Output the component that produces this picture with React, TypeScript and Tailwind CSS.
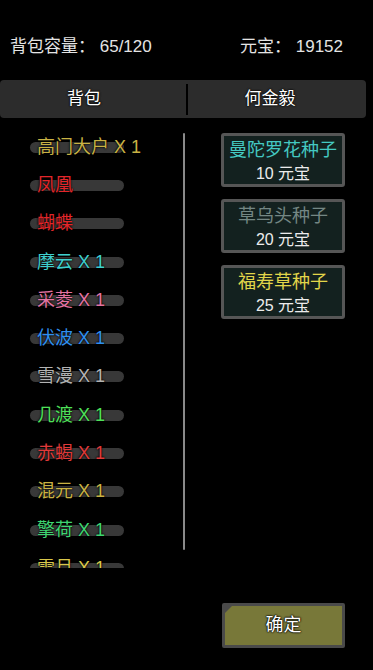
import React from 'react'

const font = { fontFamily: '"Liberation Sans", "Noto Sans CJK SC", sans-serif' }

const items = [
  { name: '高门大户 X 1', color: 'text-[#c9b244]' },
  { name: '凤凰', color: 'text-[#e2262a]' },
  { name: '蝴蝶', color: 'text-[#e2262a]' },
  { name: '摩云 X 1', color: 'text-[#3fd0cf]' },
  { name: '采菱 X 1', color: 'text-[#e373a3]' },
  { name: '伏波 X 1', color: 'text-[#2f8fef]' },
  { name: '雪漫 X 1', color: 'text-[#b3b3b3]' },
  { name: '几渡 X 1', color: 'text-[#4fe05a]' },
  { name: '赤蝎 X 1', color: 'text-[#e03a3a]' },
  { name: '混元 X 1', color: 'text-[#c9b244]' },
  { name: '擎荷 X 1', color: 'text-[#3fd572]' },
  { name: '雪月 X 1', color: 'text-[#d8c74a]' },
]

const seeds = [
  { name: '曼陀罗花种子', price: '10 元宝', color: 'text-[#44c9c2]' },
  { name: '草乌头种子', price: '20 元宝', color: 'text-[#748784]' },
  { name: '福寿草种子', price: '25 元宝', color: 'text-[#e2d64a]' },
]

export default function App() {
  return (
    <div style={font} className="w-[373px] h-[670px] bg-black overflow-hidden">
      {/* header */}
      <div className="h-[80px] flex items-center justify-between pl-[10px] pr-[30px] pt-[14px] text-[17px] text-[#e4e4e4]">
        <span>背包容量：&nbsp;65/120</span>
        <span>元宝：&nbsp;19152</span>
      </div>

      {/* tabs */}
      <div className="w-[366px] h-[38px] bg-[#2c2c2c] rounded-[4px] flex items-center text-[17px] text-white [text-shadow:0_0_2px_#000,0_0_2px_#000]">
        <div className="w-[186px] text-center pr-[18px]">背包</div>
        <div className="w-[2px] h-[31px] bg-black" />
        <div className="flex-1 text-center pr-[14px]">何金毅</div>
      </div>

      <div className="flex mt-[10px]">
        {/* bag list */}
        <div className="w-[183px] h-[440px] overflow-hidden">
          {items.map((it) => (
            <div key={it.name} className="relative h-[38.3px] flex items-center">
              <div className="absolute left-[30px] w-[94px] h-[11px] rounded-full bg-[#383838]" />
              <span
                className={`relative pl-[37px] text-[18px] whitespace-nowrap ${it.color} [text-shadow:0_0_2px_#000,0_0_2px_#000]`}
              >
                {it.name}
              </span>
            </div>
          ))}
        </div>

        {/* scrollbar */}
        <div className="w-[2px] h-[417px] mt-[5px] bg-[#8a8a8a] rounded-full" />

        {/* shop */}
        <div className="flex flex-col gap-[12px] ml-[36px] mt-[5px]">
          {seeds.map((s) => (
            <div
              key={s.name}
              className="w-[124px] h-[54px] border-[3px] border-[#565656] rounded-[3px] bg-[#13211f] flex flex-col items-center justify-center pt-[3px] leading-none"
            >
              <span className={`text-[18px] ${s.color}`}>{s.name}</span>
              <span className="mt-[7px] text-[16px] text-[#ececec]">{s.price}</span>
            </div>
          ))}
        </div>
      </div>

      {/* confirm */}
      <div className="flex justify-end pr-[28px] mt-[35px]">
        <button className="relative w-[123px] h-[45px] border-[3px] border-[#4a4a4a] rounded-[2px] bg-[#787839] text-[18px] text-white [text-shadow:0_0_2px_#000,0_0_2px_#000,0_0_1px_#000]">
          <span className="absolute left-0 top-0 w-0 h-0 border-t-[7px] border-r-[7px] border-t-[#4a4a4a] border-r-transparent" />
          确定
        </button>
      </div>
    </div>
  )
}
